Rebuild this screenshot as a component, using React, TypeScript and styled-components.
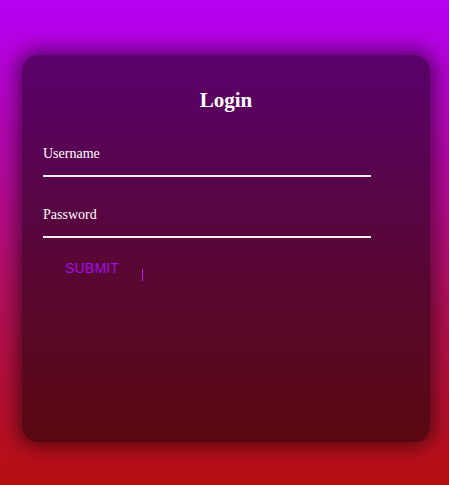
import React from 'react';
import styled, { createGlobalStyle } from 'styled-components';

const GlobalStyle = createGlobalStyle`
  html, body {
    margin: 0;
    padding: 0;
  }
  body {
    font-family: "Liberation Serif", "Times New Roman", serif;
  }
`;

const Page = styled.div`
  box-sizing: border-box;
  min-height: 485px;
  padding: 55px 19px 43px 22px;
  display: flex;
  background: linear-gradient(180deg, #b500f6 0%, #b0105c 60%, #b80f10 100%);
`;

const Card = styled.form`
  flex: 1;
  box-sizing: border-box;
  height: 387px;
  padding: 33px 21px 20px;
  border-radius: 16px;
  background: rgba(0, 0, 0, 0.5);
  box-shadow: 0 0 18px 5px rgba(0, 0, 0, 0.5);
  display: flex;
  flex-direction: column;
`;

const Title = styled.h2`
  margin: 0 0 33px;
  text-align: center;
  font-size: 21px;
  font-weight: bold;
  color: #ffffff;
`;

const Field = styled.label`
  display: flex;
  flex-direction: column;
  width: 328px;

  & + & {
    margin-top: 30px;
  }
`;

const LabelText = styled.span`
  color: #ffffff;
  font-size: 14px;
  line-height: 16px;
`;

const Input = styled.input`
  margin-top: 4px;
  height: 9px;
  padding: 0;
  border: none;
  border-bottom: 2px solid #f0f0f0;
  background: transparent;
  outline: none;
  color: #ffffff;
  font: inherit;
`;

const Actions = styled.div`
  display: flex;
  align-items: flex-start;
  padding-left: 22px;
  margin-top: 22px;
`;

const SubmitButton = styled.button`
  width: 56px;
  padding: 0;
  border: none;
  background: transparent;
  color: #a50ee8;
  font-family: "Liberation Sans", Arial, sans-serif;
  font-size: 14px;
  line-height: 16px;
  letter-spacing: 0.2px;
  text-align: left;
  cursor: pointer;
`;

const Caret = styled.span`
  width: 1px;
  height: 12px;
  margin: 9px 0 0 21px;
  background: #c01af0;
`;

export default function App() {
  return (
    <>
      <GlobalStyle />
      <Page>
        <Card onSubmit={(e) => e.preventDefault()}>
          <Title>Login</Title>
          <Field>
            <LabelText>Username</LabelText>
            <Input type="text" />
          </Field>
          <Field>
            <LabelText>Password</LabelText>
            <Input type="password" />
          </Field>
          <Actions>
            <SubmitButton type="submit">SUBMIT</SubmitButton>
            <Caret />
          </Actions>
        </Card>
      </Page>
    </>
  );
}
